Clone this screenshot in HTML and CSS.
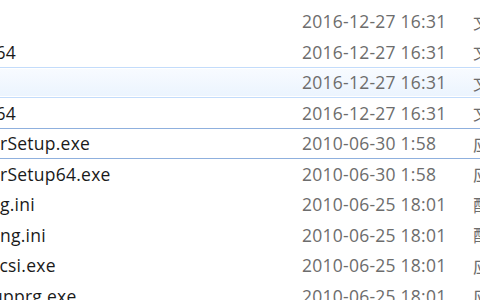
FILE: index.html
```html
<!DOCTYPE html>
<html lang="zh-CN">
<head>
    <meta charset="UTF-8">
    <title>文件列表</title>
    <link rel="stylesheet" href="styles.css">
</head>
<body>
    <div class="list">
        <div class="row">
            <span class="name"></span>
            <span class="date">2016-12-27 16:31</span>
            <span class="type">文件夹</span>
        </div>
        <div class="row">
            <span class="name"><span class="cut">x64</span></span>
            <span class="date">2016-12-27 16:31</span>
            <span class="type">文件夹</span>
        </div>
        <div class="row hover">
            <span class="name"></span>
            <span class="date">2016-12-27 16:31</span>
            <span class="type">文件夹</span>
        </div>
        <div class="row">
            <span class="name"><span class="cut">x64</span></span>
            <span class="date">2016-12-27 16:31</span>
            <span class="type">文件夹</span>
        </div>
        <div class="row focus">
            <span class="name">rSetup.exe</span>
            <span class="date">2010-06-30 1:58</span>
            <span class="type">应用程序</span>
        </div>
        <div class="row">
            <span class="name">rSetup64.exe</span>
            <span class="date">2010-06-30 1:58</span>
            <span class="type">应用程序</span>
        </div>
        <div class="row">
            <span class="name">g.ini</span>
            <span class="date">2010-06-25 18:01</span>
            <span class="type">配置设置</span>
        </div>
        <div class="row">
            <span class="name">ng.ini</span>
            <span class="date">2010-06-25 18:01</span>
            <span class="type">配置设置</span>
        </div>
        <div class="row">
            <span class="name"><span class="cut-sm">rcsi.exe</span></span>
            <span class="date">2010-06-25 18:01</span>
            <span class="type">应用程序</span>
        </div>
        <div class="row">
            <span class="name"><span class="cut-sm">upprg.exe</span></span>
            <span class="date">2010-06-25 18:01</span>
            <span class="type">应用程序</span>
        </div>
    </div>
</body>
</html>
```

FILE: styles.css
```css
body {
    margin: 0;
    background: #ffffff;
    font-family: 'Open Sans', 'Noto Sans CJK SC', sans-serif;
    font-size: 17.5px;
    letter-spacing: 0.25px;
    overflow: hidden;
}

.list {
    padding-top: 6px;
}

.row {
    box-sizing: border-box;
    height: 30.5px;
    display: grid;
    grid-template-columns: 302px 171px 1fr;
    align-items: center;
    border-top: 1px solid transparent;
    border-bottom: 1px solid transparent;
    white-space: nowrap;
}

.name {
    color: #1a1a1a;
    overflow: hidden;
}

.cut {
    display: inline-block;
    margin-left: -14px;
}

.cut-sm {
    display: inline-block;
    margin-left: -8px;
}

.date,
.type {
    color: #6d6d6d;
}

.type {
    overflow: hidden;
}

.hover {
    border-color: #c3dcfb;
    background: linear-gradient(#f8fbff, #ebf4fe);
    box-shadow: inset 0 1px 0 #ffffff, inset 0 -1px 0 #ffffff;
}

.focus {
    border-color: #8fb0de;
}
```
